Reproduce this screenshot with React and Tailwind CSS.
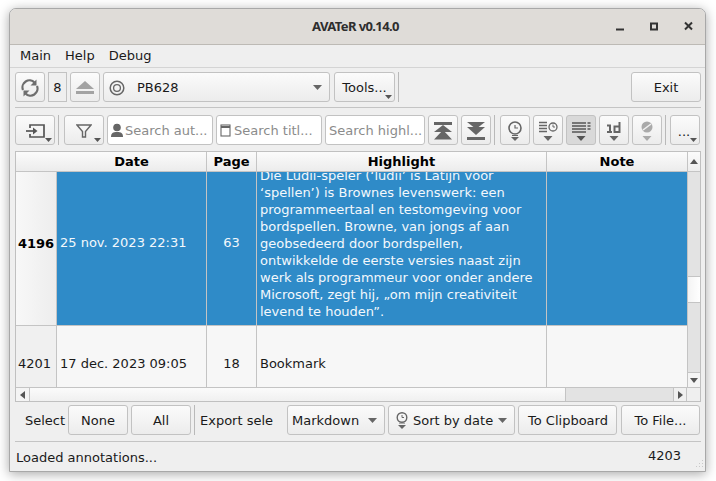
import React from "react";

const FONT = "font-['DejaVu_Sans',sans-serif]";
const BTN_BASE = "flex items-center justify-center rounded-[3px] border border-[#c2c2c2] text-[13px] text-[#1a1a1a] shrink-0 relative";
const BTN = `${BTN_BASE} pt-px bg-gradient-to-b from-[#fbfbfb] to-[#ececec]`;

const Arrow = ({ className = "" }) => (
    <svg width="7" height="4" viewBox="0 0 7 4" className={`absolute right-[2px] bottom-[2px] ${className}`}><path d="M0 0h7L3.500 4z" fill="#555" /></svg>
);

const DropDown = ({ className = "" }) => (
    <svg width="9" height="5" viewBox="0 0 9 5" className={className}><path d="M0 0h9L4.500 5z" fill="#666" /></svg>
);

const IconButton = ({ className = "w-[30px]", children, active }) => (
    <div className={`${active ? `${BTN_BASE} bg-[#d9d9d9]` : BTN} h-[30px] ${className}`}>{children}</div>
);

const Separator = ({ className = "" }) => <div className={`w-px h-[30px] bg-[#b9b9b9] shrink-0 ${className}`} />;

const SearchBox = ({ className, icon, text }) => (
    <div className={`flex items-center h-[30px] pt-px rounded-[3px] border border-[#c2c2c2] bg-white text-[13px] text-[#8b8b8b] whitespace-nowrap overflow-hidden shrink-0 ${className}`}>
        {icon}
        <span>{text}</span>
    </div>
);

const HeaderCell = ({ className, children }) => (
    <div className={`h-full flex items-center justify-center border-r border-[#c4c4c4] font-bold text-[13px] text-black bg-gradient-to-b from-[#fbfbfb] to-[#ececec] shrink-0 ${className}`}>{children}</div>
);

const Clock = ({ x = 8, y = 1, r = 6 }) => (
    <>
        <circle cx={x} cy={y + r} r={r} fill="none" stroke="#666" strokeWidth="1.600" />
        <path d={`M${x} ${y + 3}v${r - 3}h3`} fill="none" stroke="#666" strokeWidth="1.200" />
    </>
);

const HIGHLIGHT = [
    "Die Ludii-speler (‘ludii’ is Latijn voor",
    "‘spellen’) is Brownes levenswerk: een",
    "programmeertaal en testomgeving voor",
    "bordspellen. Browne, van jongs af aan",
    "geobsedeerd door bordspellen,",
    "ontwikkelde de eerste versies naast zijn",
    "werk als programmeur voor onder andere",
    "Microsoft, zegt hij, „om mijn creativiteit",
    "levend te houden”.",
];

const App = () => {
    return <div className={`w-[716px] h-[481px] bg-white pl-[9px] pt-[8px] overflow-hidden ${FONT}`}>
        <div className="w-[697px] h-[464px] flex flex-col rounded-t-[7px] border border-[#a8a8a8] bg-[#efefef] shadow-[0_2px_12px_rgba(0,0,0,0.35)]">

            {/* title bar */}
            <div className="h-[36px] shrink-0 flex items-center relative rounded-t-[6px] bg-[#dfdcd8] border-b border-[#bdbab5]">
                <div className="w-full text-center font-['Noto_Sans',sans-serif] font-bold text-[13px] tracking-[-0.6px] text-[#2e2e2e] pr-[4px]">AVATeR v0.14.0</div>
                <svg width="78" height="14" viewBox="0 0 78 14" className="absolute right-[12px] top-[10px]">
                    <path d="M1 10.500h8" stroke="#333" strokeWidth="2" />
                    <rect x="36" y="4.500" width="6" height="6" fill="none" stroke="#333" strokeWidth="2" />
                    <path d="M70 3.500l7 7M77 3.500l-7 7" stroke="#333" strokeWidth="2" />
                </svg>
            </div>

            {/* menu */}
            <div className="h-[21px] shrink-0 flex items-center pl-[10px] gap-[14px] text-[13px] text-[#1a1a1a]">
                <span>Main</span><span>Help</span><span>Debug</span>
            </div>
            <div className="h-px shrink-0 bg-[#d4d4d4] mt-px" />

            {/* device toolbar */}
            <div className="h-[30px] mt-[4px] ml-[5px] mr-[4px] flex items-center shrink-0">
                <IconButton>
                    <svg width="18" height="18" viewBox="0 0 18 18" fill="none" stroke="#6e6e6e" strokeWidth="2.200">
                        <path d="M2 11A7 7 0 0 1 13.500 3.500" />
                        <path d="M16 7A7 7 0 0 1 4.500 14.500" />
                        <path d="M15.500 0.500v6h-6z" fill="#6e6e6e" strokeWidth="0" />
                        <path d="M2.500 17.500v-6h6z" fill="#6e6e6e" strokeWidth="0" />
                    </svg>
                </IconButton>
                <div className="w-[19px] h-[30px] ml-[3px] pt-px shrink-0 flex items-center justify-center border border-[#c2c2c2] text-[13px] text-[#1a1a1a]">8</div>
                <IconButton className="w-[30px] ml-[3px]">
                    <svg width="20" height="13" viewBox="0 0 20 13" fill="#a3a3a3"><path d="M10 0l9 8H1z" /><rect x="1" y="10" width="18" height="3" /></svg>
                </IconButton>
                <div className={`${BTN} h-[30px] w-[227px] ml-[3px] justify-start`}>
                    <svg width="16" height="16" viewBox="0 0 16 16" fill="none" stroke="#666" className="ml-[5px]">
                        <circle cx="8" cy="8" r="6.800" strokeWidth="1.500" /><circle cx="8" cy="8" r="3.400" strokeWidth="1.300" />
                    </svg>
                    <span className="ml-[12px]">PB628</span>
                    <DropDown className="absolute right-[7px] top-[12px]" />
                </div>
                <div className={`${BTN} h-[30px] w-[61px] ml-[4px]`}>Tools...<Arrow /></div>
                <Separator className="ml-[3px]" />
                <div className={`${BTN} h-[30px] w-[70px] ml-auto`}>Exit</div>
            </div>
            <div className="h-px shrink-0 ml-[5px] mr-[4px] bg-[#c4c4c4] mt-[5px]" />

            {/* search toolbar */}
            <div className="h-[30px] mt-[7px] ml-[5px] mr-[4px] flex items-center shrink-0">
                <IconButton className="w-[40px]">
                    <svg width="19" height="14" viewBox="0 0 19 14" fill="none" stroke="#555" strokeWidth="1.700">
                        <path d="M4 4V1h14v12H4v-3" />
                        <path d="M0 7h7" />
                        <path d="M7 3.500l4.500 3.500L7 10.500z" fill="#555" strokeWidth="0" />
                    </svg>
                    <Arrow />
                </IconButton>
                <Separator className="ml-[3px]" />
                <IconButton className="w-[40px] ml-[5px]">
                    <svg width="16" height="16" viewBox="0 0 16 16" fill="none" stroke="#666" strokeWidth="1.400">
                        <path d="M1 2h14L9.500 8.500V14H6.500V8.500z" />
                    </svg>
                    <Arrow />
                </IconButton>
                <SearchBox className="w-[106px] ml-[3px]" text="Search aut..." icon={
                    <svg width="14" height="15" viewBox="0 0 14 15" fill="#666" className="ml-[2px] mr-[1px] shrink-0">
                        <circle cx="7" cy="4.500" r="3.800" /><path d="M1 14c0-4 2-5 6-5s6 1 6 5z" />
                    </svg>
                } />
                <SearchBox className="w-[106px] ml-[3px]" text="Search titl..." icon={
                    <svg width="11" height="13" viewBox="0 0 11 13" fill="none" stroke="#666" strokeWidth="1.100" className="mx-[3px] shrink-0">
                        <rect x="1" y="1" width="9" height="11" /><path d="M1 3h9" strokeWidth="1.800" />
                    </svg>
                } />
                <SearchBox className="w-[100px] ml-[3px] pl-[3px]" text="Search highl..." />
                <IconButton className="w-[30px] ml-[3px]">
                    <svg width="20" height="18" viewBox="0 0 20 18" fill="#666"><rect x="1" y="0" width="18" height="3" /><path d="M10 3l9 7H1z" /><path d="M10 8l9 9.500H1z" /></svg>
                </IconButton>
                <IconButton className="w-[30px] ml-[3px]">
                    <svg width="20" height="18" viewBox="0 0 20 18" fill="#666"><path d="M1 0h18l-9 7z" /><path d="M1 5h18l-9 8z" /><rect x="1" y="15" width="18" height="3" /></svg>
                </IconButton>
                <Separator className="ml-[3px]" />
                <IconButton className="w-[30px] ml-[5px]">
                    <svg width="16" height="20" viewBox="0 0 16 20" className="mt-px"><Clock /><path d="M5 14h6v1H5z" fill="#666" /><path d="M4 16h8l-4 4z" fill="#666" /></svg>
                </IconButton>
                <IconButton className="w-[30px] ml-[3px]">
                    <svg width="20" height="20" viewBox="0 0 20 20" className="mt-px">
                        <path d="M1 1.500h8M1 4.500h8M1 7.500h8M1 10.500h8" stroke="#666" strokeWidth="1.500" />
                        <circle cx="15" cy="6" r="4" fill="none" stroke="#666" strokeWidth="1.300" /><path d="M15 3.500V6h2" fill="none" stroke="#666" />
                        <path d="M5.500 15h9l-4.500 5z" fill="#666" />
                    </svg>
                </IconButton>
                <IconButton className="w-[30px] ml-[3px]" active>
                    <svg width="20" height="20" viewBox="0 0 20 20" className="mt-px">
                        <path d="M1 2h14M1 5h14M1 8h14M1 11h14" stroke="#555" strokeWidth="1.700" />
                        <path d="M16.500 2h3M16.500 5h3M16.500 8h3" stroke="#555" strokeWidth="1.700" />
                        <path d="M5.500 15h9l-4.500 5z" fill="#555" />
                    </svg>
                </IconButton>
                <IconButton className="w-[30px] ml-[3px]">
                    <svg width="16" height="20" viewBox="0 0 16 20" className="mt-px">
                        <path d="M1 4.500h3V11M1 11h5" fill="none" stroke="#666" strokeWidth="2" />
                        <path d="M13.500 1v10H8.500V5.500h5" fill="none" stroke="#666" strokeWidth="2" />
                        <path d="M3.500 15h9l-4.500 5z" fill="#666" />
                    </svg>
                </IconButton>
                <IconButton className="w-[30px] ml-[3px]">
                    <svg width="14" height="20" viewBox="0 0 14 20" className="mt-px">
                        <circle cx="7" cy="6" r="5.500" fill="#aaa" /><path d="M3 9L11 3" stroke="#f2f2f2" strokeWidth="1.500" />
                        <path d="M2.500 15h9L7 20z" fill="#aaa" />
                    </svg>
                </IconButton>
                <Separator className="ml-[3px]" />
                <div className={`${BTN} h-[30px] w-[30px] ml-[4px]`}><span className="mt-[3px] mr-[2px]">...</span><Arrow /></div>
            </div>

            {/* table */}
            <div className="h-[251px] mt-[6px] ml-[5px] mr-[4px] shrink-0 flex flex-col border border-[#c0c0c0] bg-[#f7f7f7]">
                <div className="flex flex-1 min-h-0">
                    <div className="w-[671px] shrink-0 flex flex-col overflow-hidden">
                        <div className="h-[20px] flex shrink-0 border-b border-[#c4c4c4]">
                            <HeaderCell className="w-[41px] border-r-0" />
                            <HeaderCell className="w-[150px]">Date</HeaderCell>
                            <HeaderCell className="w-[50px]">Page</HeaderCell>
                            <HeaderCell className="w-[290px]">Highlight</HeaderCell>
                            <HeaderCell className="w-[140px] border-r-0">Note</HeaderCell>
                        </div>
                        <div className="h-[154px] flex shrink-0 border-b border-[#c4c4c4] text-[13px] text-[#f3f8fc] bg-[#2f8bc8]">
                            <div className="w-[41px] shrink-0 flex items-center justify-center pb-[9px] font-bold text-black bg-gradient-to-r from-[#f8f8f8] to-[#ededed] border-r border-[#c4c4c4]">4196</div>
                            <div className="w-[150px] shrink-0 flex items-center pl-[3px] pb-[11px] border-r border-[#c4c4c4]">25 nov. 2023 22:31</div>
                            <div className="w-[50px] shrink-0 flex items-center justify-center pb-[11px] border-r border-[#c4c4c4]">63</div>
                            <div className="w-[290px] shrink-0 flex flex-col justify-end overflow-hidden pl-[3px] pb-[5px] border-r border-[#c4c4c4] leading-[17px] whitespace-nowrap">
                                {HIGHLIGHT.map((line) => <div key={line} className="shrink-0">{line}</div>)}
                            </div>
                            <div className="flex-1" />
                        </div>
                        <div className="flex-1 flex text-[13px] text-[#1a1a1a]">
                            <div className="w-[41px] shrink-0 flex items-center pl-[2px] pt-[14px] bg-[#f0f0f0] border-r border-[#c4c4c4]">4201</div>
                            <div className="w-[150px] shrink-0 flex items-center pl-[3px] pt-[14px] border-r border-[#c4c4c4]">17 dec. 2023 09:05</div>
                            <div className="w-[50px] shrink-0 flex items-center justify-center pt-[14px] border-r border-[#c4c4c4]">18</div>
                            <div className="w-[290px] shrink-0 flex items-center pl-[3px] pt-[14px] border-r border-[#c4c4c4]">Bookmark</div>
                        </div>
                    </div>
                    {/* vertical scrollbar */}
                    <div className="flex-1 flex flex-col border-l border-[#c4c4c4] bg-[#e3e3e3]">
                        <div className="h-[20px] shrink-0 flex items-center justify-center bg-gradient-to-b from-[#fbfbfb] to-[#ededed] border-b border-[#c4c4c4]">
                            <svg width="8" height="5" viewBox="0 0 8 5"><path d="M4 0l4 5H0z" fill="#555" /></svg>
                        </div>
                        <div className="h-[104px] shrink-0" />
                        <div className="h-[27px] shrink-0 bg-gradient-to-r from-[#f4f4f4] to-white border-y border-[#c4c4c4]" />
                        <div className="flex-1" />
                        <div className="h-[15px] shrink-0 flex items-center justify-center bg-[#f4f4f4] border-t border-[#c4c4c4]">
                            <svg width="8" height="5" viewBox="0 0 8 5"><path d="M0 0h8L4 5z" fill="#555" /></svg>
                        </div>
                    </div>
                </div>
                {/* horizontal scrollbar */}
                <div className="h-[14px] shrink-0 flex border-t border-[#c4c4c4]">
                    <div className="w-[14px] shrink-0 flex items-center justify-center bg-[#f4f4f4] border-r border-[#c4c4c4]">
                        <svg width="5" height="8" viewBox="0 0 5 8"><path d="M5 0v8L0 4z" fill="#555" /></svg>
                    </div>
                    <div className="w-[536px] shrink-0 bg-gradient-to-b from-[#fbfbfb] to-[#f0f0f0] border-r border-[#c4c4c4]" />
                    <div className="flex-1 bg-[#e3e3e3]" />
                    <div className="w-[14px] shrink-0 flex items-center justify-center bg-[#f0f0f0] border-x border-[#c4c4c4]">
                        <svg width="5" height="8" viewBox="0 0 5 8"><path d="M0 0v8l5-4z" fill="#555" /></svg>
                    </div>
                    <div className="w-[13px] shrink-0 bg-[#efefef]" />
                </div>
            </div>

            {/* export bar */}
            <div className="h-[30px] mt-[3px] ml-[5px] mr-[4px] flex items-center shrink-0 text-[13px] text-[#1a1a1a]">
                <span className="ml-[10px] w-[43px] shrink-0 pt-[2px]">Select</span>
                <div className={`${BTN} h-[30px] w-[60px]`}>None</div>
                <div className={`${BTN} h-[30px] w-[60px] ml-[3px]`}>All</div>
                <Separator className="ml-[3px]" />
                <span className="ml-[5px] w-[73px] shrink-0 pt-[2px] overflow-hidden whitespace-nowrap">Export sele</span>
                <div className={`${BTN} h-[30px] w-[98px] ml-[14px] justify-start pl-[4px]`}>Markdown<DropDown className="absolute right-[7px] top-[12px]" /></div>
                <div className={`${BTN} h-[30px] w-[127px] ml-[3px] justify-start`}>
                    <svg width="14" height="17" viewBox="0 0 14 17" className="ml-[6px]">
                        <circle cx="7" cy="5.500" r="4.800" fill="none" stroke="#666" strokeWidth="1.400" />
                        <path d="M7 3v2.500h2" fill="none" stroke="#666" /><path d="M4 11.500h6V12H4z" fill="#666" /><path d="M3 13h8l-4 4z" fill="#666" />
                    </svg>
                    <span className="ml-[4px]">Sort by date</span>
                    <DropDown className="absolute right-[7px] top-[12px]" />
                </div>
                <div className={`${BTN} h-[30px] w-[99px] ml-[3px] pl-px`}>To Clipboard</div>
                <div className={`${BTN} h-[30px] w-[79px] ml-[4px]`}>To File...</div>
            </div>
            <div className="h-px shrink-0 ml-[5px] mr-[4px] bg-[#c4c4c4] mt-[6px]" />

            {/* status bar */}
            <div className="flex-1 flex items-center relative text-[13px] text-[#1a1a1a] pl-[6px] pt-[2px]">
                <span>Loaded annotations...</span>
                <span className="ml-auto mr-[24px] -mt-[4px]">4203</span>
                <svg width="11" height="11" viewBox="0 0 11 11" fill="#c9c9c9" className="absolute right-[1px] bottom-[1px]">
                    <rect x="9" y="1" width="1" height="1" /><rect x="6" y="4" width="1" height="1" /><rect x="9" y="4" width="1" height="1" />
                    <rect x="3" y="7" width="1" height="1" /><rect x="6" y="7" width="1" height="1" /><rect x="9" y="7" width="1" height="1" />
                </svg>
            </div>
        </div>
    </div>
}

export default App;
